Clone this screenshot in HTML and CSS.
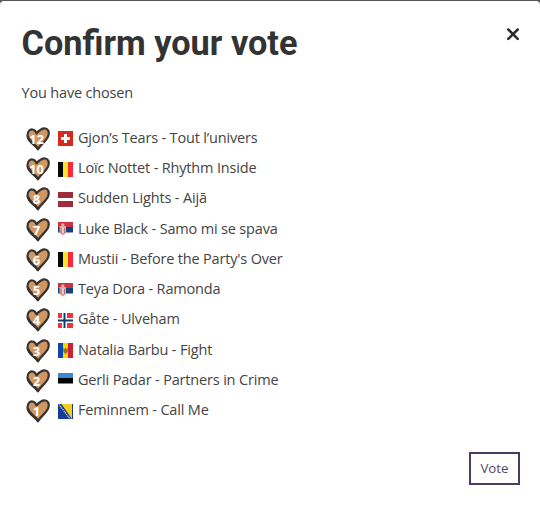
FILE: index.html
```html
<!DOCTYPE html>
<html lang="en">
<head>
<meta charset="utf-8">
<title>Confirm your vote</title>
<link rel="stylesheet" href="styles.css">
</head>
<body>
<svg width="0" height="0" class="defs" aria-hidden="true">
  <symbol id="heart" viewBox="0 0 24 24">
    <path d="M12 22.300C9.500 18 1.800 15.500 1.500 8.500C1.400 4.500 3.800 2.200 6.500 2.500C8.800 2.800 9.800 4.300 10.600 6.300C12.500 3.300 16.500 1.200 19.300 1.500C22.500 2 23.300 5.300 22.400 8.500C21 14 15 16.500 12 22.300Z" fill="#d09763" stroke="#35322f" stroke-width="2.200" stroke-linejoin="round"/>
    <path d="M1.900 9.500C3.500 15.300 9.500 17.500 12 22" fill="none" stroke="#35322f" stroke-width="2.600"/>
  </symbol>
  <symbol id="ch" viewBox="0 0 15 15"><path fill="#d9291c" d="M0 0h15v15H0z"/><path fill="#fff" d="M6 3h3v3h3v3H9v3H6V9H3V6h3z"/></symbol>
  <symbol id="be" viewBox="0 0 15 15"><path fill="#080808" d="M0 0h5v15H0z"/><path fill="#ffe02f" d="M5 0h5v15H5z"/><path fill="#f62c3c" d="M10 0h5v15h-5z"/></symbol>
  <symbol id="lv" viewBox="0 0 15 15"><path fill="#fff" d="M0 0h15v15H0z"/><path fill="#a02b3b" d="M0 0h15v6H0zM0 9h15v6H0z"/></symbol>
  <symbol id="rs" viewBox="0 0 15 15"><path fill="#fff" d="M0 0h15v15H0z"/><path fill="#c9343e" d="M0 0h15v5H0z"/><path fill="#14437b" d="M0 5h15v5.500H0z"/><path fill="#dfaaa6" d="M1.500 4h6.500v7L4.800 13.500 1.500 11z"/><path fill="#cf6a6c" d="M2.500 6h4.500v5L4.800 12.500 2.500 11z"/><path fill="#eed8d6" d="M3.800 5.500h2V11.500h-2z"/><path fill="#dcb098" d="M3.300 1.500h3V4h-3z"/></symbol>
  <symbol id="no" viewBox="0 0 15 15"><path fill="#ec3340" d="M0 0h15v15H0z"/><path fill="#fff" d="M4 0h5v15H4zM0 5h15v5H0z"/><path fill="#153a70" d="M5.500 0h2v15h-2zM0 6.500h15v2H0z"/></symbol>
  <symbol id="md" viewBox="0 0 15 15"><path fill="#0b48a8" d="M0 0h5v15H0z"/><path fill="#ffd500" d="M5 0h5v15H5z"/><path fill="#cd2039" d="M10 0h5v15h-5z"/><path fill="#9a6b24" d="M5.300 5l1.500 1 .7-1.500.7 1.500 1.500-1v4L7.500 11 5.300 9z"/><path fill="#667d40" d="M6.500 7h2v2h-2z"/></symbol>
  <symbol id="ee" viewBox="0 0 15 15"><path fill="#fff" d="M0 0h15v15H0z"/><path fill="#3d86d0" d="M0 0h15v5H0z"/><path fill="#050505" d="M0 5h15v5.500H0z"/></symbol>
  <symbol id="ba" viewBox="0 0 15 15"><path fill="#173c96" d="M0 0h15v15H0z"/><path fill="#f9cf17" d="M3.500 0H14v15z"/><path d="M1 .5l11.500 15" stroke="#dce5ef" stroke-width="1.200" stroke-dasharray="1.200 .8"/></symbol>
</svg>
<main class="dialog">
  <header class="head">
    <h1>Confirm your vote</h1>
    <button class="close" aria-label="Close"><svg viewBox="0 0 14 14" width="14" height="14"><path d="M2.300 2.500l9.400 9.400M11.700 2.500l-9.400 9.400" stroke="#292c31" stroke-width="2.500" stroke-linecap="round"/></svg></button>
  </header>
  <p class="intro">You have chosen</p>
  <ol class="votes">
    <li><span class="points"><svg><use href="#heart"/></svg><b>12</b></span><svg class="flag"><use href="#ch"/></svg><span class="song">Gjon’s Tears - Tout l’univers</span></li>
    <li><span class="points"><svg><use href="#heart"/></svg><b>10</b></span><svg class="flag"><use href="#be"/></svg><span class="song">Loïc Nottet - Rhythm Inside</span></li>
    <li><span class="points"><svg><use href="#heart"/></svg><b>8</b></span><svg class="flag"><use href="#lv"/></svg><span class="song">Sudden Lights - Aijā</span></li>
    <li><span class="points"><svg><use href="#heart"/></svg><b>7</b></span><svg class="flag"><use href="#rs"/></svg><span class="song">Luke Black - Samo mi se spava</span></li>
    <li><span class="points"><svg><use href="#heart"/></svg><b>6</b></span><svg class="flag"><use href="#be"/></svg><span class="song">Mustii - Before the Party's Over</span></li>
    <li><span class="points"><svg><use href="#heart"/></svg><b>5</b></span><svg class="flag"><use href="#rs"/></svg><span class="song">Teya Dora - Ramonda</span></li>
    <li><span class="points"><svg><use href="#heart"/></svg><b>4</b></span><svg class="flag"><use href="#no"/></svg><span class="song">Gåte - Ulveham</span></li>
    <li><span class="points"><svg><use href="#heart"/></svg><b>3</b></span><svg class="flag"><use href="#md"/></svg><span class="song">Natalia Barbu - Fight</span></li>
    <li><span class="points"><svg><use href="#heart"/></svg><b>2</b></span><svg class="flag"><use href="#ee"/></svg><span class="song">Gerli Padar - Partners in Crime</span></li>
    <li><span class="points"><svg><use href="#heart"/></svg><b>1</b></span><svg class="flag"><use href="#ba"/></svg><span class="song">Feminnem - Call Me</span></li>
  </ol>
  <footer class="foot"><button class="vote">Vote</button></footer>
</main>
</body>
</html>
```
FILE: styles.css
```css
* { box-sizing: border-box; }
body {
  margin: 0;
  padding-top: 1px;
  height: 505px;
  overflow: hidden;
  background: #575556;
  color: #444;
  font: 14.5px/20px "Open Sans", sans-serif;
  letter-spacing: -0.17px;
}
.defs { position: absolute; }
.dialog {
  height: 504px;
  padding: 20px 20px 0 21.500px;
  background: #fff;
  border-radius: 4px 4px 0 0;
  display: flex;
  flex-direction: column;
}
.head { display: flex; justify-content: space-between; height: 44px; }
h1 {
  margin: 0;
  font: 700 34.300px/45px Roboto, sans-serif;
  letter-spacing: normal;
  color: #333;
}
button { font: inherit; background: none; }
.close { display: flex; border: 0; padding: 6px 0 0; height: 20px; }
.intro { margin: 18px 0 0; }
.votes { list-style: none; margin: 20.700px 0 0; padding: 0 0 0 4.500px; }
.votes li { display: flex; align-items: center; height: 30.270px; }
.points { display: grid; width: 25px; height: 24px; margin-right: 7px; place-items: center; }
.points svg, .points b { grid-area: 1 / 1; }
.points svg { width: 24px; height: 24px; margin-right: 1px; }
.points b { color: #fff; font-size: 13px; line-height: 16px; margin-right: 4px; letter-spacing: 0; }
.flag { width: 15px; height: 15px; margin-right: 5px; }
.song { white-space: nowrap; margin-bottom: 2px; }
.foot { display: flex; justify-content: flex-end; margin-top: 25.300px; }
.vote {
  width: 51px;
  height: 33px;
  padding: 0;
  border: 2px solid #4b3b63;
  color: #51486a;
  font-size: 13.300px;
  letter-spacing: normal;
}
```
